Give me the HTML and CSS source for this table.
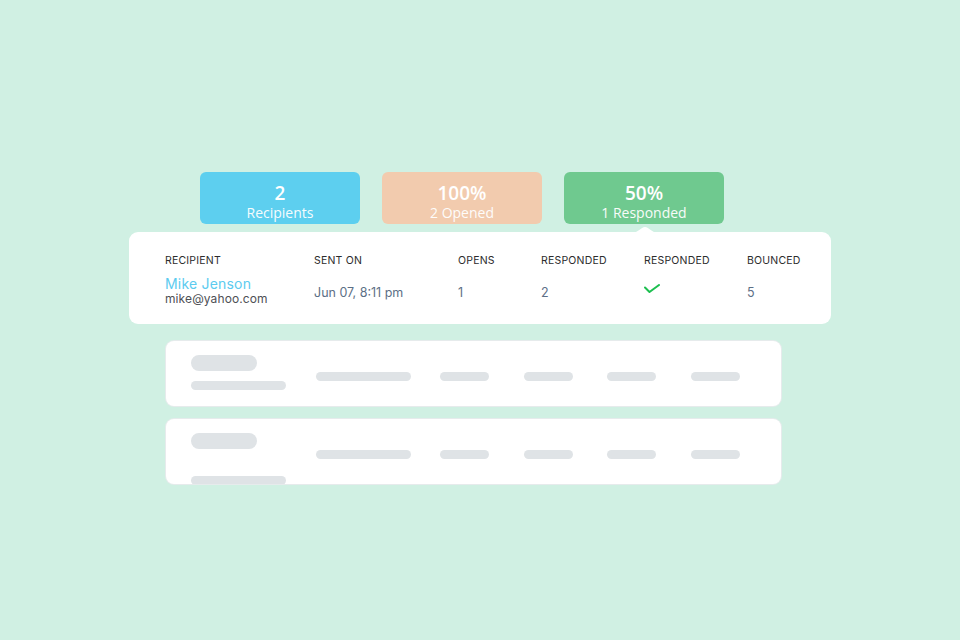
FILE: index.html
```html
<!DOCTYPE html>
<html lang="en">
<head>
<meta charset="utf-8">
<title>Campaign stats</title>
<link rel="stylesheet" href="styles.css">
</head>
<body>
<main class="stage">
  <section class="stats">
    <div class="stat stat-blue"><span class="stat-num">2</span><span class="stat-label">Recipients</span></div>
    <div class="stat stat-orange"><span class="stat-num">100%</span><span class="stat-label">2 Opened</span></div>
    <div class="stat stat-green"><span class="stat-num">50%</span><span class="stat-label">1 Responded</span></div>
  </section>

  <section class="table-card">
    <span class="pointer"></span>
    <div class="grid head">
      <div>RECIPIENT</div>
      <div>SENT ON</div>
      <div>OPENS</div>
      <div>RESPONDED</div>
      <div>RESPONDED</div>
      <div>BOUNCED</div>
    </div>
    <div class="grid row">
      <div class="who">
        <span class="name">Mike Jenson</span>
        <span class="email">mike@yahoo.com</span>
      </div>
      <div class="val">Jun 07, 8:11 pm</div>
      <div class="val">1</div>
      <div class="val">2</div>
      <div class="val"><svg class="check" width="17" height="10" viewBox="0 0 17 10"><path d="M1 3.5 L5.5 8 L15 1" fill="none" stroke="#1cbf4f" stroke-width="2" stroke-linecap="round" stroke-linejoin="round"/></svg></div>
      <div class="val">5</div>
    </div>
  </section>

  <section class="skel-card">
    <div class="skel-left">
      <span class="pill"></span>
      <span class="bar bar-long"></span>
    </div>
    <span class="bar bar-long"></span>
    <span class="bar"></span>
    <span class="bar"></span>
    <span class="bar"></span>
    <span class="bar"></span>
  </section>

  <section class="skel-card skel-card-2">
    <div class="skel-left">
      <span class="pill"></span>
      <span class="bar bar-long"></span>
    </div>
    <span class="bar bar-long"></span>
    <span class="bar"></span>
    <span class="bar"></span>
    <span class="bar"></span>
    <span class="bar"></span>
  </section>
</main>
</body>
</html>
```

FILE: styles.css
```css
* { box-sizing: border-box; }
html, body { margin: 0; padding: 0; }
body {
  width: 960px;
  height: 640px;
  background: #d0f0e3;
  overflow: hidden;
  font-family: Inter, "Liberation Sans", sans-serif;
}
.stage {
  display: flex;
  flex-direction: column;
  align-items: flex-start;
  padding-top: 172px;
}
.stats {
  display: flex;
  gap: 22px;
  margin-left: 200px;
}
.stat {
  width: 160px;
  height: 52px;
  border-radius: 6px;
  display: flex;
  flex-direction: column;
  align-items: center;
  justify-content: flex-start;
  padding-top: 11px;
  color: #fff;
  font-family: "Open Sans", sans-serif;
}
.stat-num { font-size: 19px; font-weight: 600; line-height: 21px; }
.stat-label { font-size: 14px; line-height: 17px; opacity: 0.95; }
.stat-blue { background: #5dcfef; }
.stat-orange { background: #f2cbae; }
.stat-green { background: #6fc98f; }

.table-card {
  position: relative;
  margin-top: 8px;
  margin-left: 129px;
  width: 702px;
  height: 92px;
  background: #fff;
  border-radius: 9px;
  padding: 23px 0 0 36px;
}
.pointer {
  position: absolute;
  top: -5px;
  left: 503px;
  width: 26px;
  height: 6px;
  background: #fff;
  clip-path: path("M0 6 C6 6 9 0 13 0 C17 0 20 6 26 6 Z");
}
.grid {
  display: grid;
  grid-template-columns: 149px 144px 83px 103px 103px auto;
}
.head {
  font-size: 10.5px;
  color: #2c2c2c;
  letter-spacing: 0.2px;
  line-height: 12px;
}
.row {
  margin-top: 9px;
  align-items: center;
}
.who { display: flex; flex-direction: column; }
.name { font-size: 14px; color: #5ccbef; line-height: 15px; letter-spacing: 0.2px; }
.email { font-size: 12px; color: #4e4f55; line-height: 15px; letter-spacing: 0.1px; }
.val { font-size: 12.5px; color: #5d6f86; padding-top: 2px; }
.check { display: block; margin-top: -6px; }

.skel-card {
  margin-top: 17px;
  margin-left: 166px;
  width: 615px;
  height: 65px;
  background: #fff;
  border-radius: 8px;
  box-shadow: 0 0 0 1px #e6ebec;
  overflow: hidden;
  padding: 14px 0 0 25px;
  display: grid;
  grid-template-columns: 125px 124px 84px 83px 84px auto;
  align-items: start;
}
.skel-card-2 { margin-top: 13px; }
.skel-left { display: flex; flex-direction: column; gap: 10px; }
.skel-card-2 .skel-left { gap: 27px; }
.pill {
  display: block;
  width: 66px;
  height: 16px;
  border-radius: 8px;
  background: #dfe3e6;
}
.bar {
  display: block;
  width: 49px;
  height: 9px;
  border-radius: 5px;
  background: #dfe3e6;
  margin-top: 17px;
}
.bar-long { width: 95px; }
.skel-left .bar { margin-top: 0; }
```
